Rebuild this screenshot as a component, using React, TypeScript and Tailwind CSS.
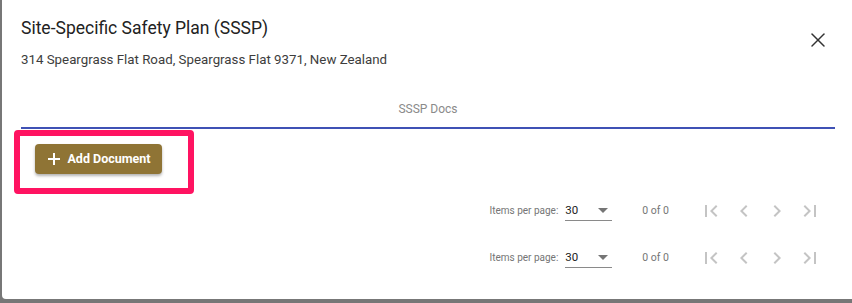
import { X } from "lucide-react";

const icons = {
  first: "M18.41 16.59L13.82 12l4.59-4.59L17 6l-6 6 6 6zM6 6h2v12H6z",
  prev: "M15.41 7.41L14 6l-6 6 6 6 1.41-1.41L10.83 12z",
  next: "M10 6L8.59 7.41 13.17 12l-4.58 4.59L10 18l6-6z",
  last: "M5.59 7.41L10.18 12l-4.59 4.59L7 18l6-6-6-6zM16 6h2v12h-2z",
};

function NavButton({ d }: { d: string }) {
  return (
    <button className="w-[33px] h-[33px] flex items-center justify-center" disabled>
      <svg width="24" height="24" viewBox="0 0 24 24" fill="#c4c4c4">
        <path d={d} />
      </svg>
    </button>
  );
}

function Paginator() {
  return (
    <div className="flex flex-row justify-end items-center pr-[7px] h-[47px] text-[10px] text-[#757575]">
      <span>Items per page:</span>
      <div className="ml-[7px] w-[47px] h-[20px] flex flex-row items-center justify-between border-b border-[#8a8a8a] text-[11.5px] text-[#222]">
        <span className="pt-[2px]">30</span>
        <svg width="10" height="5" viewBox="0 0 10 5" className="mr-[4px]" fill="#757575">
          <path d="M0 0 L10 0 L5 5 Z" />
        </svg>
      </div>
      <span className="ml-[30px] mr-[25px] text-[10.5px] text-[#757575]">0 of 0</span>
      <NavButton d={icons.first} />
      <NavButton d={icons.prev} />
      <NavButton d={icons.next} />
      <NavButton d={icons.last} />
    </div>
  );
}

export default function App() {
  return (
    <div
      className="w-[852px] h-[303px] bg-[#777777] pl-[2px] overflow-hidden"
      style={{ fontFamily: "Roboto, 'Noto Sans', sans-serif" }}
    >
      <div className="h-[299px] bg-white rounded-bl-[4px] flex flex-col px-[19px]">
        <div className="flex flex-row justify-between items-start pt-[17px]">
          <div className="flex flex-col">
            <h2 className="text-[17.5px] font-normal text-[#222] leading-[22px]">
              Site-Specific Safety Plan (SSSP)
            </h2>
            <p className="mt-[13px] text-[13.3px] text-[#3d3d3d] leading-[16px]">
              314 Speargrass Flat Road, Speargrass Flat 9371, New Zealand
            </p>
          </div>
          <button className="mt-[11px] mr-[3px] w-[24px] h-[24px] flex items-center justify-center text-[#333]">
            <X size={24} strokeWidth={1.5} />
          </button>
        </div>

        <div className="mt-[22px] w-[814px] border-b-2 border-[#3f51b5] h-[39px] flex items-center justify-center">
          <span className="text-[12px] text-[#8a8a8a] pt-[1px]">SSSP Docs</span>
        </div>

        <div className="relative h-[64px] pl-[14px] pt-[15px]">
          <div className="absolute left-[-7px] top-[1px] w-[180px] h-[64px] border-[6px] border-[#ff1361] rounded-[4px]" />
          <button className="w-[127px] h-[30px] rounded-[4px] bg-[#8f7435] text-white text-[12.5px] font-bold flex flex-row items-center justify-center gap-[7px] pl-[2px] shadow-[0_2px_3px_rgba(0,0,0,0.3)]">
            <svg width="12" height="12" viewBox="0 0 12 12" stroke="white" strokeWidth="2">
              <path d="M6 0 V12 M0 6 H12" />
            </svg>
            <span>Add Document</span>
          </button>
        </div>

        <div className="-mt-[6px]">
          <Paginator />
          <Paginator />
        </div>
      </div>
    </div>
  );
}
